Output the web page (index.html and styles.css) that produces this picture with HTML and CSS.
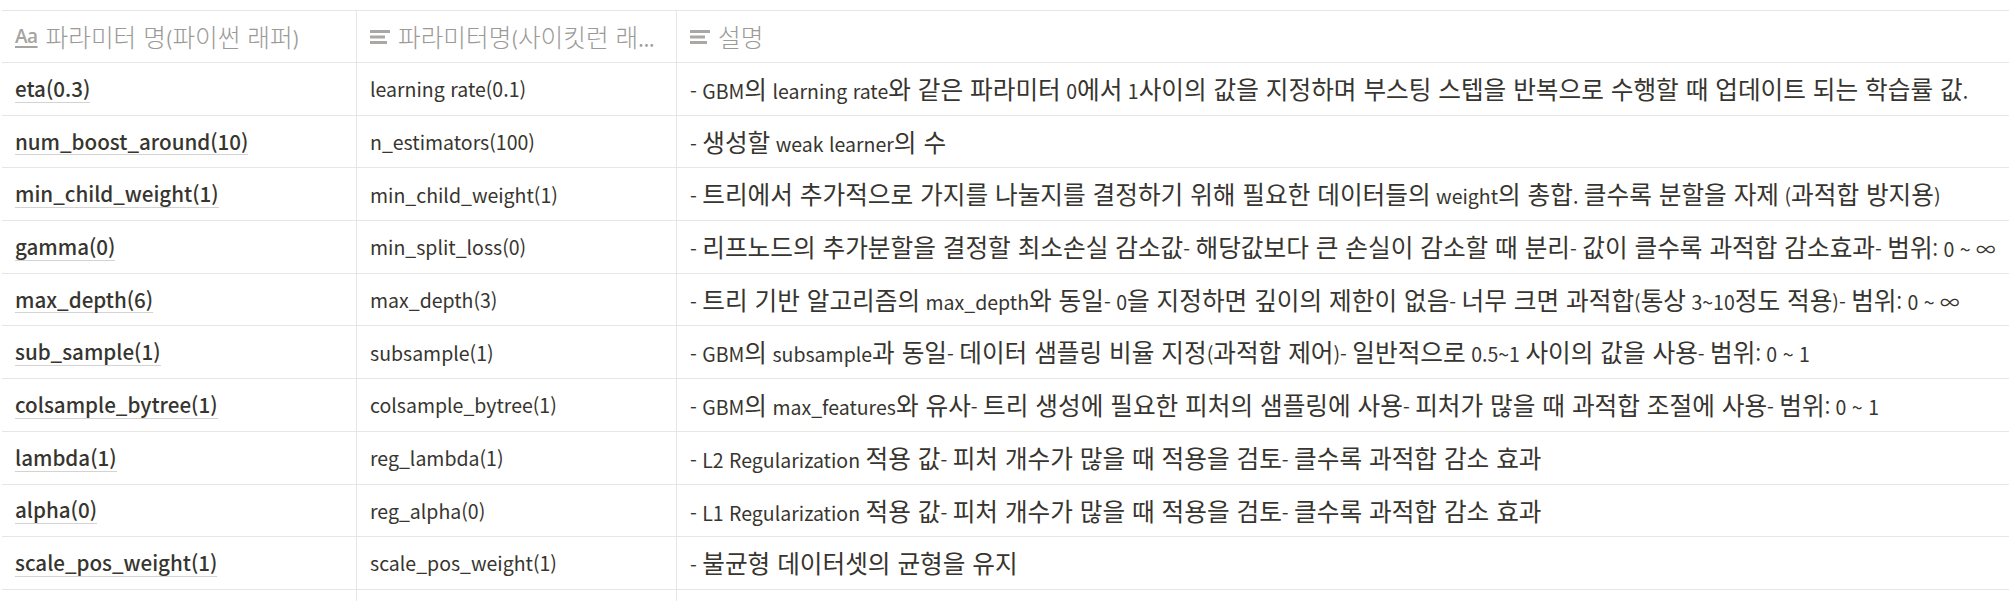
FILE: index.html
```html
<!DOCTYPE html>
<html lang="ko">
<head>
<meta charset="utf-8">
<title>XGBoost 파라미터</title>
<link rel="stylesheet" href="styles.css">
</head>
<body>
<div class="table">
  <div class="row head">
    <div class="cell"><span class="icon-aa">Aa</span><span class="txt"><span class="k">파라미터 명</span>(<span class="k">파이썬 래퍼</span>)</span></div>
    <div class="cell"><svg class="icon-text" viewBox="0 0 20 15"><rect x="0" y="1" width="20" height="3"/><rect x="0" y="6.5" width="15" height="3"/><rect x="0" y="12" width="17" height="3"/></svg><span class="txt"><span class="k">파라미터명</span>(<span class="k">사이킷런 래</span>...</span></div>
    <div class="cell"><svg class="icon-text" viewBox="0 0 20 15"><rect x="0" y="1" width="20" height="3"/><rect x="0" y="6.5" width="15" height="3"/><rect x="0" y="12" width="17" height="3"/></svg><span class="txt"><span class="k">설명</span></span></div>
  </div>
  <div class="row"><div class="cell"><span class="title">eta(0.3)</span></div><div class="cell"><span class="txt">learning rate(0.1)</span></div><div class="cell"><span class="txt">- GBM<span class="k">의</span> learning rate<span class="k">와 같은 파라미터</span> 0<span class="k">에서</span> 1<span class="k">사이의 값을 지정하며 부스팅 스텝을 반복으로 수행할 때 업데이트 되는 학습률 값</span>.</span></div></div>
  <div class="row"><div class="cell"><span class="title">num_boost_around(10)</span></div><div class="cell"><span class="txt">n_estimators(100)</span></div><div class="cell"><span class="txt">- <span class="k">생성할</span> weak learner<span class="k">의 수</span></span></div></div>
  <div class="row"><div class="cell"><span class="title">min_child_weight(1)</span></div><div class="cell"><span class="txt">min_child_weight(1)</span></div><div class="cell"><span class="txt">- <span class="k">트리에서 추가적으로 가지를 나눌지를 결정하기 위해 필요한 데이터들의</span> weight<span class="k">의 총합</span>. <span class="k">클수록 분할을 자제</span> (<span class="k">과적합 방지용</span>)</span></div></div>
  <div class="row"><div class="cell"><span class="title">gamma(0)</span></div><div class="cell"><span class="txt">min_split_loss(0)</span></div><div class="cell"><span class="txt">- <span class="k">리프노드의 추가분할을 결정할 최소손실 감소값</span>- <span class="k">해당값보다 큰 손실이 감소할 때 분리</span>- <span class="k">값이 클수록 과적합 감소효과</span>- <span class="k">범위</span>: 0 ~ ∞</span></div></div>
  <div class="row"><div class="cell"><span class="title">max_depth(6)</span></div><div class="cell"><span class="txt">max_depth(3)</span></div><div class="cell"><span class="txt">- <span class="k">트리 기반 알고리즘의</span> max_depth<span class="k">와 동일</span>- 0<span class="k">을 지정하면 깊이의 제한이 없음</span>- <span class="k">너무 크면 과적합</span>(<span class="k">통상</span> 3~10<span class="k">정도 적용</span>)- <span class="k">범위</span>: 0 ~ ∞</span></div></div>
  <div class="row"><div class="cell"><span class="title">sub_sample(1)</span></div><div class="cell"><span class="txt">subsample(1)</span></div><div class="cell"><span class="txt">- GBM<span class="k">의</span> subsample<span class="k">과 동일</span>- <span class="k">데이터 샘플링 비율 지정</span>(<span class="k">과적합 제어</span>)- <span class="k">일반적으로</span> 0.5~1 <span class="k">사이의 값을 사용</span>- <span class="k">범위</span>: 0 ~ 1</span></div></div>
  <div class="row"><div class="cell"><span class="title">colsample_bytree(1)</span></div><div class="cell"><span class="txt">colsample_bytree(1)</span></div><div class="cell"><span class="txt">- GBM<span class="k">의</span> max_features<span class="k">와 유사</span>- <span class="k">트리 생성에 필요한 피처의 샘플링에 사용</span>- <span class="k">피처가 많을 때 과적합 조절에 사용</span>- <span class="k">범위</span>: 0 ~ 1</span></div></div>
  <div class="row"><div class="cell"><span class="title">lambda(1)</span></div><div class="cell"><span class="txt">reg_lambda(1)</span></div><div class="cell"><span class="txt">- L2 Regularization <span class="k">적용 값</span>- <span class="k">피처 개수가 많을 때 적용을 검토</span>- <span class="k">클수록 과적합 감소 효과</span></span></div></div>
  <div class="row"><div class="cell"><span class="title">alpha(0)</span></div><div class="cell"><span class="txt">reg_alpha(0)</span></div><div class="cell"><span class="txt">- L1 Regularization <span class="k">적용 값</span>- <span class="k">피처 개수가 많을 때 적용을 검토</span>- <span class="k">클수록 과적합 감소 효과</span></span></div></div>
  <div class="row"><div class="cell"><span class="title">scale_pos_weight(1)</span></div><div class="cell"><span class="txt">scale_pos_weight(1)</span></div><div class="cell"><span class="txt">- <span class="k">불균형 데이터셋의 균형을 유지</span></span></div></div>
  <div class="row"><div class="cell"></div><div class="cell"></div><div class="cell"></div></div>
</div>
</body>
</html>
```
FILE: styles.css
```css
html, body {
  margin: 0;
  padding: 0;
  background: #ffffff;
}
body {
  font-family: "Noto Sans CJK KR", "Noto Sans", sans-serif;
  font-size: 19.5px;
  color: #37352f;
  overflow: hidden;
}
.k {
  font-size: 24.65px;
}
.table {
  margin: 10px 0 0 2px;
  border-top: 1px solid #e6e6e4;
}
.row {
  display: grid;
  grid-template-columns: 355px 320px 1fr;
  height: 52.7px;
  box-sizing: border-box;
  border-bottom: 1px solid #e6e6e4;
}
.row.head {
  height: 52px;
}
.cell {
  display: flex;
  align-items: center;
  gap: 8px;
  padding: 0 13px;
  border-right: 1px solid #e6e6e4;
  white-space: nowrap;
  overflow: hidden;
  line-height: 1.2;
}
.cell:last-child {
  border-right: none;
}
.head .cell {
  color: #9b9a97;
}
.head .k {
  font-weight: 300;
}
.icon-aa {
  font-family: "Open Sans", "Noto Sans", sans-serif;
  font-size: 19px;
  font-weight: 600;
  color: #a5a4a1;
  text-decoration: underline;
  text-decoration-thickness: 2px;
  text-underline-offset: 3px;
  letter-spacing: -0.5px;
}
.icon-text {
  width: 20px;
  height: 15px;
  fill: #a9a8a5;
  flex: none;
}
.title {
  font-size: 20.6px;
  font-weight: 500;
  border-bottom: 1px solid rgba(55, 53, 47, 0.22);
  line-height: 1.3;
}
```
